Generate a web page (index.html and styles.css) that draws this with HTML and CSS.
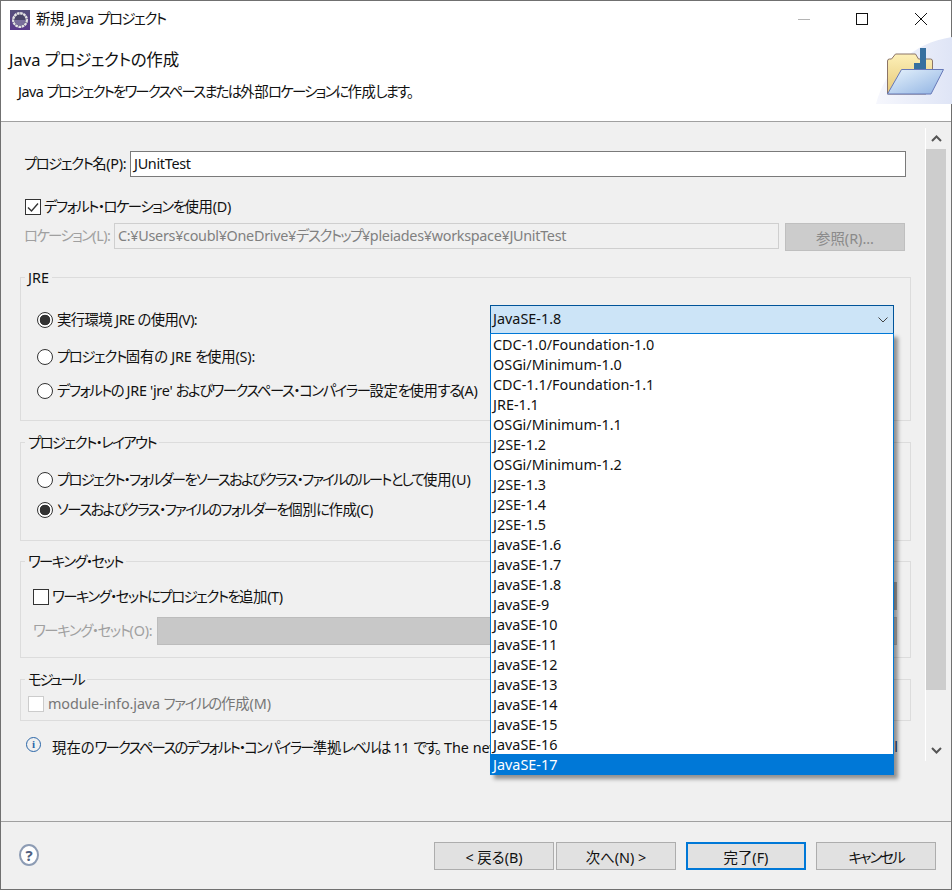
FILE: index.html
```html
<!DOCTYPE html>
<html lang="ja">
<head>
<meta charset="utf-8">
<title>新規 Java プロジェクト</title>
<link rel="stylesheet" href="styles.css">
</head>
<body>
<div class="window">
  <div class="titlebar">
    <svg class="app-icon" width="20" height="20" viewBox="0 0 20 20">
      <defs><linearGradient id="appbg" x1="0" y1="0" x2="0" y2="1"><stop offset="0" stop-color="#55507a"/><stop offset="1" stop-color="#5b3a8c"/></linearGradient></defs>
      <rect width="20" height="20" fill="url(#appbg)"/>
      <circle cx="10" cy="10" r="6.800" fill="#4a4668" stroke="#e4e4e4" stroke-width="2.400" stroke-dasharray="2.600 .6"/>
      <path d="M4.500 10a5.500 5.500 0 0 0 11 0z" fill="#7a6f9c"/>
    </svg>
    <span class="title-text">新規 Java <span class="k">プロジェクト</span></span>
    <div class="controls">
      <span class="ctl ctl-min"></span>
      <span class="ctl ctl-max"></span>
      <svg class="ctl-close" width="12" height="12" viewBox="0 0 12 12"><path d="M0 0L12 12M12 0L0 12" stroke="#111" stroke-width="1"/></svg>
    </div>
  </div>
  <header class="header">
    <div class="header-text">
      <h1 class="page-title">Java <span class="k">プロジェクトの</span>作成</h1>
      <p class="page-desc">Java <span class="k">プロジェクトをワークスペースまたは</span>外部<span class="k">ロケーションに</span>作成<span class="k">します。</span></p>
    </div>
    <svg class="banner" width="76" height="67" viewBox="0 0 76 67">
      <defs>
        <linearGradient id="wash" x1="0" y1="0" x2="1" y2="0"><stop offset="0" stop-color="#f6f7fd"/><stop offset="1" stop-color="#dfe5f6"/></linearGradient>
        <linearGradient id="back" x1="0" y1="0" x2="0" y2="1"><stop offset="0" stop-color="#fdf0b8"/><stop offset="1" stop-color="#e6c878"/></linearGradient>
        <linearGradient id="front" x1="0" y1="0" x2="1" y2="1"><stop offset="0" stop-color="#e8f4fd"/><stop offset="1" stop-color="#8fb2e2"/></linearGradient>
      </defs>
      <path d="M0 67C8 34 36 6 76 0V67z" fill="url(#wash)"/>
      <path d="M11.500 57V24q0-2 2-2h2l4-5h20l3 5h12q2 0 2 2v9L50 57z" fill="url(#back)" stroke="#8b7468" stroke-width="1"/>
      <path d="M38 32V26h6V11h6V32z" fill="#37709f"/>
      <path d="M11.500 57L25.500 32.500H67.500L55 57z" fill="url(#front)" stroke="#6678b8" stroke-width="1"/>
    </svg>
  </header>
  <main class="body">
    <div class="form">
      <div class="row row-name">
        <label class="lbl lbl-name"><span class="k">プロジェクト</span>名(P):</label>
        <div class="field field-name">JUnitTest</div>
      </div>
      <div class="row row-default">
        <span class="check">
          <svg width="14" height="14" viewBox="0 0 14 14"><path d="M2 7.500L5.500 11L12 3.500" fill="none" stroke="#333" stroke-width="1.400"/></svg>
        </span>
        <span class="lbl lbl-check lbl-default"><span class="k">デフォルト・ロケーションを</span>使用(D)</span>
      </div>
      <div class="row row-location">
        <label class="lbl lbl-off lbl-loc"><span class="k">ロケーション</span>(L):</label>
        <div class="field field-loc">C:¥Users¥coubl¥OneDrive¥<span class="k">デスクトップ</span>¥pleiades¥workspace¥JUnitTest</div>
        <div class="btn btn-off">参照(R)...</div>
      </div>

      <section class="group group-jre">
        <span class="legend">JRE</span>
        <div class="row row-r1">
          <span class="radio radio-on"></span>
          <span class="lbl">実行環境 JRE の使用(V):</span>
          <div class="combo">
            <span class="combo-value">JavaSE-1.8</span>
            <svg width="10" height="6" viewBox="0 0 10 6"><path d="M.5 .5L5 5L9.500 .5" fill="none" stroke="#444" stroke-width="1"/></svg>
            <ul class="popup">
              <li>CDC-1.0/Foundation-1.0</li>
              <li>OSGi/Minimum-1.0</li>
              <li>CDC-1.1/Foundation-1.1</li>
              <li>JRE-1.1</li>
              <li>OSGi/Minimum-1.1</li>
              <li>J2SE-1.2</li>
              <li>OSGi/Minimum-1.2</li>
              <li>J2SE-1.3</li>
              <li>J2SE-1.4</li>
              <li>J2SE-1.5</li>
              <li>JavaSE-1.6</li>
              <li>JavaSE-1.7</li>
              <li>JavaSE-1.8</li>
              <li>JavaSE-9</li>
              <li>JavaSE-10</li>
              <li>JavaSE-11</li>
              <li>JavaSE-12</li>
              <li>JavaSE-13</li>
              <li>JavaSE-14</li>
              <li>JavaSE-15</li>
              <li>JavaSE-16</li>
              <li class="selected">JavaSE-17</li>
            </ul>
          </div>
        </div>
        <div class="row row-r2">
          <span class="radio"></span>
          <span class="lbl"><span class="k">プロジェクト</span>固有の JRE <span class="k">を</span>使用(S):</span>
        </div>
        <div class="row row-r3">
          <span class="radio"></span>
          <span class="lbl"><span class="k">デフォルトの</span> JRE 'jre' <span class="k">およびワークスペース・コンパイラー</span>設定<span class="k">を</span>使用<span class="k">する</span>(A)</span>
        </div>
      </section>

      <section class="group group-layout">
        <span class="legend"><span class="k">プロジェクト・レイアウト</span></span>
        <div class="row row-l1">
          <span class="radio"></span>
          <span class="lbl"><span class="k">プロジェクト・フォルダーをソースおよびクラス・ファイルのルートとして</span>使用(U)</span>
        </div>
        <div class="row row-l2">
          <span class="radio radio-on"></span>
          <span class="lbl"><span class="k">ソースおよびクラス・ファイルのフォルダーを</span>個別<span class="k">に</span>作成(C)</span>
        </div>
      </section>

      <section class="group group-ws">
        <span class="legend"><span class="k">ワーキング・セット</span></span>
        <div class="row row-w1">
          <span class="check"></span>
          <span class="lbl lbl-check"><span class="k">ワーキング・セットにプロジェクトを</span>追加(T)</span>
          <span class="ws-new"></span>
        </div>
        <div class="row row-w2">
          <span class="lbl lbl-off lbl-ws"><span class="k">ワーキング・セット</span>(O):</span>
          <span class="field-ws"></span>
        </div>
      </section>

      <section class="group group-mod">
        <span class="legend legend-mod"><span class="k">モジュール</span></span>
        <div class="row row-m1">
          <span class="check check-off"></span>
          <span class="lbl lbl-mod">module-info.java <span class="k">ファイルの</span>作成(M)</span>
        </div>
      </section>

      <div class="row row-info">
        <span class="info-icon">i</span>
        <span class="info-text">現在の<span class="k">ワークスペースのデフォルト・コンパイラー</span>準拠<span class="k">レベルは</span> 11 <span class="k">です。</span> The new</span>
        <span class="info-end">l</span>
      </div>
    </div>
    <div class="scrollbar">
      <span class="arrow">
        <svg width="11" height="7" viewBox="0 0 11 7"><path d="M1 6L5.500 1.500L10 6" fill="none" stroke="#555" stroke-width="2"/></svg>
      </span>
      <span class="thumb"></span>
      <span class="track"></span>
      <span class="arrow">
        <svg width="11" height="7" viewBox="0 0 11 7"><path d="M1 1L5.500 5.500L10 1" fill="none" stroke="#555" stroke-width="2"/></svg>
      </span>
    </div>
  </main>
  <footer class="footer">
    <span class="help">?</span>
    <div class="buttons">
      <div class="btn btn-back">&lt; 戻る(B)</div>
      <div class="btn btn-next">次へ(N) &gt;</div>
      <div class="btn btn-default">完了(F)</div>
      <div class="btn btn-cancel"><span class="k">キャンセル</span></div>
    </div>
  </footer>
</div>
</body>
</html>
```
FILE: styles.css
```css
* { box-sizing: border-box; }
html, body { margin: 0; padding: 0; }
body {
  width: 952px;
  height: 890px;
  overflow: hidden;
  font-family: "Noto Sans", "Noto Sans CJK JP", sans-serif;
  font-size: 14.4px;
  font-feature-settings: "palt";
  color: #111;
}
.k { letter-spacing: -1.2px; }
.window {
  width: 952px;
  height: 890px;
  border: 1px solid #707070;
  display: flex;
  flex-direction: column;
  background: #f0f0f0;
}
.titlebar {
  height: 37px;
  flex: none;
  background: #fff;
  display: flex;
  align-items: center;
  padding-left: 9px;
}
.app-icon { margin-right: 6px; }
.title-text { line-height: 20px; position: relative; top: -1px; letter-spacing: -.3px; }
.title-text .k { letter-spacing: -1.5px; }
.controls {
  margin-left: auto;
  display: flex;
  align-items: center;
  padding-right: 24px;
  padding-bottom: 1px;
}
.ctl-min { width: 12px; height: 1px; background: #b4b4b4; margin-right: 46px; }
.ctl-max { width: 12px; height: 12px; border: 1px solid #111; margin-right: 47px; }
.ctl-close { display: block; }
.header {
  height: 84px;
  flex: none;
  background: #fff;
  border-bottom: 1px solid #a0a0a0;
  display: flex;
  justify-content: space-between;
  align-items: flex-start;
}
.page-title {
  margin: 12px 0 0 8px;
  font-size: 16.500px;
  font-weight: 400;
  line-height: 20px;
}
.page-title .k { letter-spacing: -.4px; }
.page-desc {
  margin: 12px 0 0 17px;
  line-height: 20px;
  letter-spacing: -.5px;
}
.page-desc .k { letter-spacing: -1.8px; }
.banner { display: block; margin-top: -1px; margin-right: -1px; }
.body {
  height: 699px;
  flex: none;
  display: flex;
  align-items: flex-start;
}
.form {
  width: 911px;
  padding: 29px 0 0 19px;
  flex: none;
  display: flex;
  flex-direction: column;
}
.row { display: flex; align-items: center; }
.lbl { line-height: 20px; white-space: nowrap; flex: none; }
.lbl-off { color: #a0a0a0; }
.row-name { height: 26px; width: 886px; }
.lbl-name { margin-left: 4px; width: 106px; letter-spacing: -.3px; }
.lbl-name .k { letter-spacing: -1.5px; }
.field {
  background: #fff;
  border: 1px solid #7a7a7a;
  height: 26px;
  line-height: 24px;
  padding-left: 3px;
}
.field-name { flex: 1; letter-spacing: -.3px; }
.row-default { margin-top: 22px; height: 16px; padding-left: 5px; }
.check {
  width: 16px;
  height: 16px;
  flex: none;
  border: 1px solid #333;
  background: #fff;
  display: flex;
  align-items: center;
  justify-content: center;
}
.check-off { border-color: #ccc; }
.lbl-check { margin-left: 3px; }
.lbl-default { letter-spacing: -.25px; }
.lbl-default .k { letter-spacing: -1.5px; }
.row-location { margin-top: 8px; height: 28px; align-items: flex-start; width: 885px; }
.lbl-loc { margin: 3px 0 0 4px; width: 90px; letter-spacing: -.45px; }
.lbl-loc .k { letter-spacing: -1.65px; }
.field-loc {
  width: 665px;
  flex: none;
  background: #f0f0f0;
  border-color: #cfcfcf;
  color: #808080;
  white-space: nowrap;
  letter-spacing: -.3px;
}
.field-loc .k { letter-spacing: -1.5px; }
.btn {
  width: 120px;
  height: 28px;
  flex: none;
  background: #e1e1e1;
  border: 1px solid #adadad;
  display: flex;
  align-items: center;
  justify-content: center;
}
.btn-off { margin-left: 6px; background: #ccc; border-color: #bfbfbf; color: #8a8a8a; }

.group {
  position: relative;
  width: 891px;
  border: 1px solid #dcdcdc;
}
.legend {
  position: absolute;
  left: 4px;
  top: -10px;
  line-height: 20px;
  padding: 0 3px;
  background: #f0f0f0;
  white-space: nowrap;
}
.legend .k { letter-spacing: -1.6px; }
.legend-mod .k { letter-spacing: -2.2px; }
.radio {
  width: 16px;
  height: 16px;
  flex: none;
  border: 1px solid #333;
  border-radius: 50%;
  background: #fff;
  margin-right: 4px;
}
.radio-on { background: radial-gradient(circle, #333 0, #333 5px, #fff 5.6px); }

.group-jre { margin-top: 26px; height: 144px; padding: 27px 0 0 16px; }
.row-r1 { height: 29px; }
.row-r1 .lbl { width: 433px; letter-spacing: -.6px; }
.combo {
  position: relative;
  flex: none;
  width: 404px;
  height: 29px;
  background: #cce4f7;
  border: 1px solid #005499;
  display: flex;
  align-items: center;
  justify-content: space-between;
  padding: 0 5px 0 2px;
}
.combo-value { position: relative; top: -1px; }
.popup {
  position: absolute;
  z-index: 5;
  left: -1px;
  top: 27px;
  width: 404px;
  margin: 0;
  padding: 0;
  list-style: none;
  background: #fff;
  border: 1px solid #0078d7;
  box-shadow: 4px 4px 4px rgba(0,0,0,.4);
}
.popup li { height: 20px; line-height: 22px; padding-left: 2px; white-space: nowrap; }
.popup .selected { background: #0078d7; color: #fff; }
.row-r2 { height: 20px; margin-top: 13px; }
.row-r2 .lbl { letter-spacing: -.2px; }
.row-r2 .k { letter-spacing: -1.4px; }
.row-r3 { height: 20px; margin-top: 14px; }
.row-r3 .lbl { letter-spacing: -.3px; }
.row-r3 .k { letter-spacing: -1.5px; }

.group-layout { margin-top: 21px; height: 99px; padding: 27px 0 0 16px; }
.row-l1 { height: 20px; }
.row-l1 .k { letter-spacing: -1.75px; }
.row-l2 { height: 20px; margin-top: 10px; }
.row-l2 .lbl { letter-spacing: -.4px; }
.row-l2 .k { letter-spacing: -1.6px; }

.group-ws { margin-top: 20px; height: 97px; padding: 25px 0 0 12px; }
.row-w1 { height: 20px; position: relative; }
.row-w1 .lbl { letter-spacing: -.35px; }
.row-w1 .k { letter-spacing: -1.55px; }
.ws-new { position: absolute; right: 13px; top: -5px; width: 120px; height: 28px; background: #adadad; }
.row-w2 { height: 28px; margin-top: 10px; }
.lbl-ws { width: 124px; letter-spacing: -.2px; }
.lbl-ws .k { letter-spacing: -1.4px; }
.field-ws { width: 740px; height: 28px; background: #c8c8c8; border: 1px solid #bcbcbc; }

.group-mod { margin-top: 21px; height: 42px; padding: 14px 0 0 7px; }
.row-m1 { height: 20px; }
.lbl-mod { color: #767676; margin-left: 4px; letter-spacing: -.1px; }
.lbl-mod .k { letter-spacing: -1.3px; }

.row-info { margin-top: 15px; height: 20px; padding-left: 6px; width: 878px; position: relative; overflow: hidden; }
.info-icon {
  width: 15px;
  height: 15px;
  flex: none;
  border: 1.5px solid #2a66a8;
  border-radius: 50%;
  color: #2a66a8;
  font: 700 11px/12px "Liberation Serif", serif;
  text-align: center;
  margin: -3px 11px 0 0;
}
.info-text { white-space: nowrap; }
.info-text .k { letter-spacing: -1.8px; }
.info-end { margin-left: auto; color: #1d3a70; }

.scrollbar {
  width: 21px;
  height: 633px;
  margin: 6px 0 0 13px;
  flex: none;
  border-left: 1px solid #fff;
  display: flex;
  flex-direction: column;
  background: #f0f0f0;
}
.arrow { height: 21px; flex: none; display: flex; align-items: center; justify-content: center; }
.thumb { height: 541px; flex: none; background: #cdcdcd; }
.track { flex: 1; }

.footer {
  flex: 1;
  border-top: 1px solid #a0a0a0;
  display: flex;
  align-items: flex-start;
  justify-content: space-between;
  padding: 20px 15px 0 18px;
}
.help {
  width: 20px;
  height: 22px;
  margin-top: 2px;
  border: 2px solid #8d9cb4;
  border-radius: 50%;
  background: #fff;
  color: #4f6080;
  font-weight: 700;
  font-size: 15px;
  line-height: 18px;
  text-align: center;
}
.buttons { display: flex; }
.btn-next { margin-left: 2px; }
.btn-default { margin-left: 10px; border: 2px solid #0078d7; }
.btn-cancel { margin-left: 10px; }
.btn-cancel .k { letter-spacing: -2px; }
```
